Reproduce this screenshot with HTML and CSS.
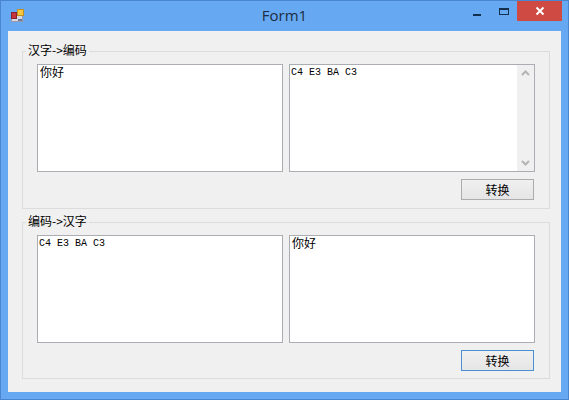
FILE: index.html
```html
<!DOCTYPE html>
<html lang="zh">
<head>
    <meta charset="UTF-8">
    <title>Form1</title>
    <link rel="stylesheet" href="styles.css">
</head>
<body>
    <div class="window">
        <div class="titlebar">
            <svg class="app-icon" width="16" height="16" viewBox="0 0 16 16">
                <rect x="0.5" y="4.5" width="11" height="9" fill="#d8d8e0" stroke="#9a9aa8"/>
                <rect x="0.5" y="4.5" width="5" height="6" fill="#c8343c" stroke="#8a2030"/>
                <rect x="6.5" y="1.5" width="6" height="6" fill="#f8c840" stroke="#c09020"/>
                <rect x="7" y="11" width="4" height="2" fill="#6a7a98"/>
            </svg>
            <div class="title">Form1</div>
            <div class="controls">
                <div class="ctl"><span class="ctl-min"></span></div>
                <div class="ctl"><span class="ctl-max"></span></div>
                <div class="ctl-close">
                    <svg width="10" height="10" viewBox="0 0 10 10">
                        <path d="M1.5 1.5L8.5 8.5M8.5 1.5L1.5 8.5" stroke="#fff" stroke-width="2"/>
                    </svg>
                </div>
            </div>
        </div>
        <div class="client">
            <div class="group">
                <div class="legend">汉字-&gt;编码</div>
                <div class="boxes">
                    <div class="box cjk">你好</div>
                    <div class="box has-scroll">
                        <div class="box-text mono">C4 E3 BA C3</div>
                        <div class="scrollbar">
                            <svg width="9" height="6" viewBox="0 0 9 6"><path d="M1 5L4.5 1.5L8 5" fill="none" stroke="#b4b4b4" stroke-width="2"/></svg>
                            <svg width="9" height="6" viewBox="0 0 9 6"><path d="M1 1L4.5 4.5L8 1" fill="none" stroke="#b4b4b4" stroke-width="2"/></svg>
                        </div>
                    </div>
                </div>
                <div class="actions"><button class="btn">转换</button></div>
            </div>
            <div class="group group-low">
                <div class="legend">编码-&gt;汉字</div>
                <div class="boxes">
                    <div class="box mono">C4 E3 BA C3</div>
                    <div class="box cjk">你好</div>
                </div>
                <div class="actions"><button class="btn btn-active">转换</button></div>
            </div>
        </div>
    </div>
</body>
</html>
```

FILE: styles.css
```css
html, body {
    margin: 0;
    height: 100%;
    overflow: hidden;
}

.window {
    width: 569px;
    height: 400px;
    box-sizing: border-box;
    background-color: #66a8f2;
    border: 1px solid #4a86d0;
    padding: 0 7px 7px 7px;
    display: flex;
    flex-direction: column;
}

.titlebar {
    height: 30px;
    display: flex;
    align-items: center;
    position: relative;
    flex-shrink: 0;
}

.app-icon {
    margin: 0 0 0 3px;
}

.title {
    position: absolute;
    left: 0;
    right: 0;
    top: 4px;
    text-align: center;
    font-family: "Open Sans", sans-serif;
    font-size: 15px;
    color: #1c2c40;
}

.controls {
    margin-left: auto;
    display: flex;
    align-self: flex-start;
    margin-right: -1px;
}

.ctl {
    width: 27px;
    height: 20px;
    position: relative;
    display: flex;
    justify-content: center;
}

.ctl-min {
    width: 8px;
    height: 2px;
    margin-top: 13px;
    background-color: #14304f;
}

.ctl-max {
    width: 8px;
    height: 4px;
    margin: 7px 0 0 0;
    border: 1px solid #14304f;
    border-top-width: 2px;
}

.ctl-close {
    width: 45px;
    height: 20px;
    background-color: #cf4a42;
    display: flex;
    align-items: center;
    justify-content: center;
}

.client {
    flex: 1;
    background-color: #f0f0f0;
    box-sizing: border-box;
    padding: 20px 11px 13px 14px;
    display: flex;
    flex-direction: column;
    gap: 13px;
}

.group {
    height: 158px;
    box-sizing: border-box;
    border: 1px solid #dcdcdc;
    position: relative;
    padding: 12px 14px 0 14px;
}

.group-low {
    height: 157px;
}

.legend {
    position: absolute;
    left: 3px;
    top: -11px;
    padding: 0 2px;
    background-color: #f0f0f0;
    font-family: "Noto Sans CJK SC", sans-serif;
    font-size: 12px;
    line-height: 17px;
    color: #000;
}

.boxes {
    display: flex;
    gap: 6px;
}

.box {
    width: 246px;
    height: 108px;
    box-sizing: border-box;
    background-color: #fff;
    border: 1px solid #abadb3;
    color: #000;
    padding: 1px;
}

.cjk {
    font-family: "Noto Sans CJK SC", sans-serif;
    font-size: 12px;
    line-height: 14px;
    padding: 0 2px;
}

.mono, .box-text {
    font-family: "Liberation Mono", monospace;
    font-size: 10px;
    line-height: 14px;
}

.has-scroll {
    display: flex;
    padding: 0;
}

.box-text {
    flex: 1;
    padding: 1px;
}

.scrollbar {
    width: 17px;
    background-color: #f0f0f0;
    display: flex;
    flex-direction: column;
    align-items: center;
    justify-content: space-between;
    padding: 5px 0;
}

.actions {
    display: flex;
    justify-content: flex-end;
    margin-top: 7px;
    padding-right: 1px;
}

.btn {
    width: 73px;
    height: 21px;
    padding: 0;
    border: 1px solid #acacac;
    border-radius: 0;
    background: linear-gradient(#f0f0f0, #e5e5e5);
    font-family: "Noto Sans CJK SC", sans-serif;
    font-size: 12px;
    color: #000;
}

.btn-active {
    border-color: #4a8fd0;
}
```
